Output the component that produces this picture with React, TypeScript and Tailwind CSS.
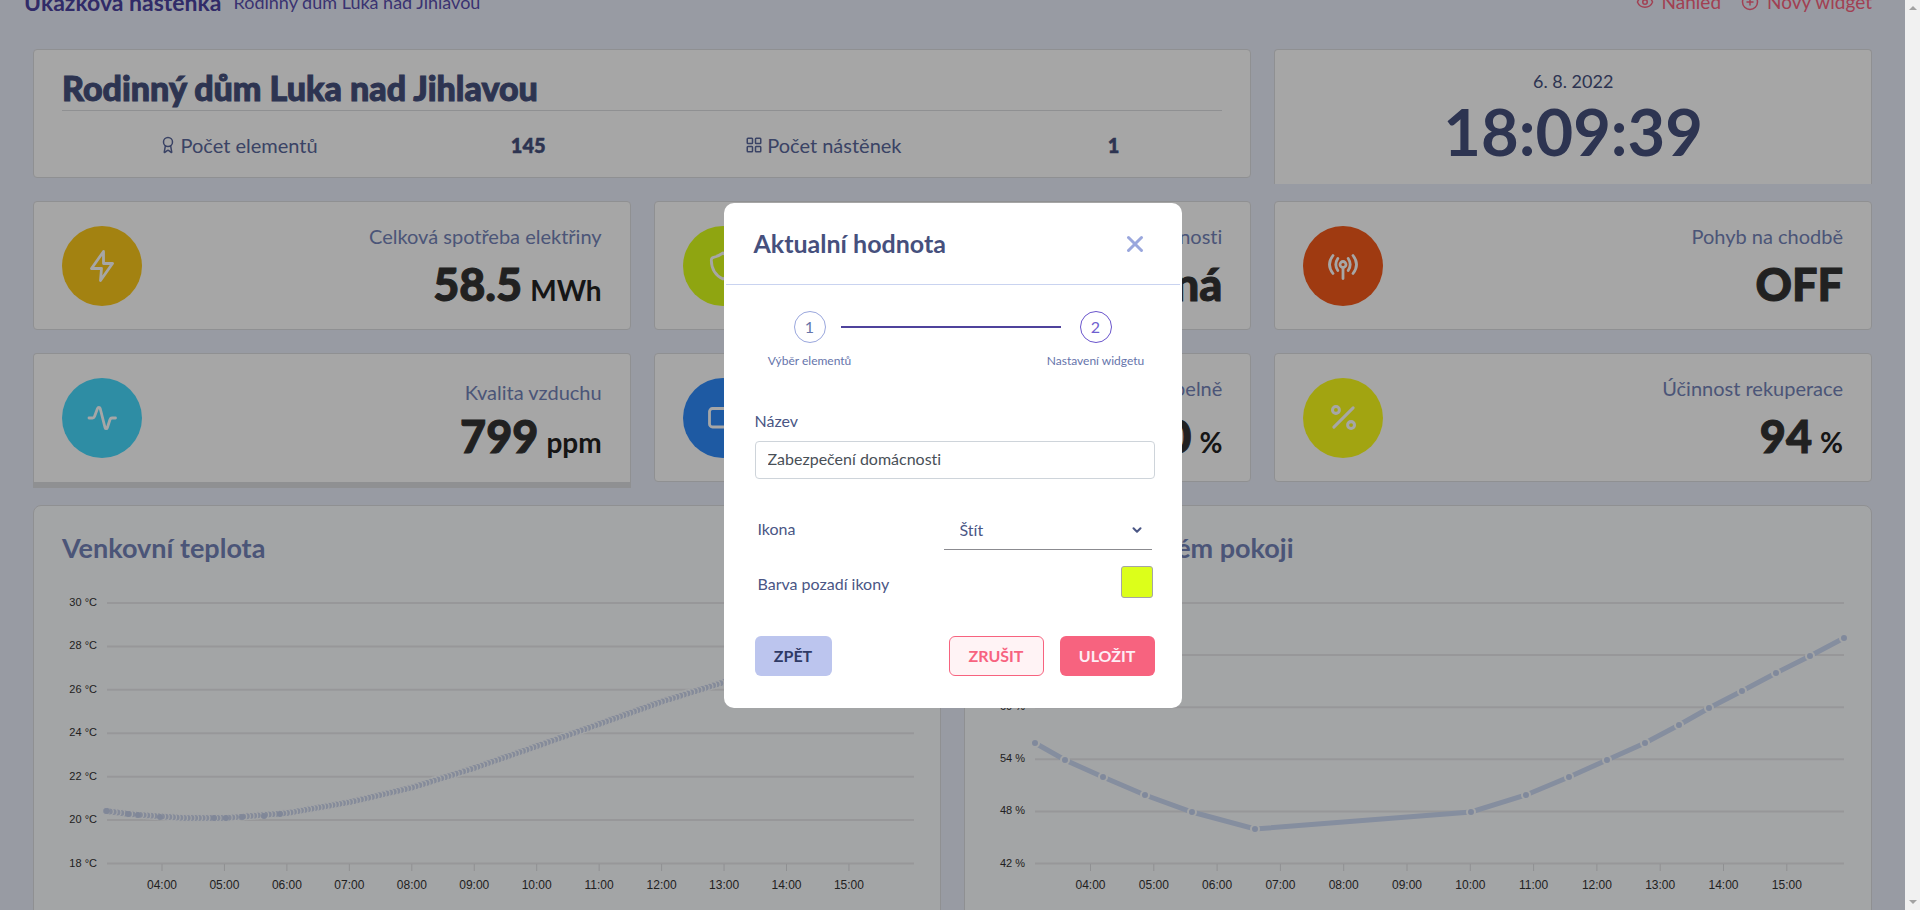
import React from "react";
import { Award, ChevronDown, Eye, LayoutGrid, Percent, PlusCircle, X } from "lucide-react";

type Point = [number, number];

const card = "rounded border border-[#dcdde0] bg-white";
const black = "font-black [-webkit-text-stroke:1px_currentColor]";

function Glyph({ children }: { children: React.ReactNode }) {
  return (
    <svg viewBox="0 0 32 32" className="size-8" fill="none" stroke="currentColor" strokeWidth="2.8" strokeLinecap="round" strokeLinejoin="round" aria-hidden="true">
      {children}
    </svg>
  );
}

const Bolt = () => <Glyph><path d="M17.5 1.5L5.5 18.5h10L14.5 30.5L26.5 13.5h-9Z" /></Glyph>;
const Guard = () => <Glyph><path d="M16 3c-3 2.2-6 3.6-9.5 4.3C4.9 7.7 4.3 8.7 4.3 10.2C4.5 18.5 8.5 25.5 16 29C23.5 25.5 27.5 18.5 27.7 10.2C27.7 8.7 27.1 7.7 25.5 7.3C22 6.6 19 5.2 16 3Z" /></Glyph>;
const Antenna = () => (
  <Glyph>
    <circle cx="16" cy="14.5" r="3" />
    <path d="M16 18v10.5M10.8 8.5q-4 6 0 12M21.2 8.5q4 6 0 12M6 5.5q-7 9 0 18M26 5.5q7 9 0 18" />
  </Glyph>
);
const Pulse = () => <Glyph><path d="M3 16h3.500c1 0 1.600-.5 2-1.500L11.500 6.500c.6-1.600 2.200-1.600 2.700 0L19 25.500c.5 1.600 1.900 1.600 2.400 0L24 17.500c.4-1 1-1.500 2-1.500h3.500" /></Glyph>;
const Cell = () => <Glyph><rect x="2.5" y="6.5" width="25" height="18.5" rx="3" /><path d="M31 13v6" /></Glyph>;

function ValueCard({ icon, color, label, value, unit, className = "h-[129px]", labelClass = "mb-1" }: {
  icon: React.ReactNode; color: string; label: string; value: string; unit?: string; className?: string; labelClass?: string;
}) {
  return (
    <section className={`${card} flex items-center justify-between px-7 ${className}`}>
      <div className={`flex size-20 shrink-0 items-center justify-center rounded-full text-white ${color}`}>{icon}</div>
      <div className="flex flex-col items-end pt-1">
        <h2 className={`text-[20px] leading-7 text-[#7483b8] ${labelClass}`}>{label}</h2>
        <p className={`text-[45px] leading-[60px] text-[#333] ${black}`}>
          {value}
          {unit && <span className="ml-2 text-[28px] leading-none font-bold text-[#222] [-webkit-text-stroke:0px]">{unit}</span>}
        </p>
      </div>
    </section>
  );
}

function Chart({ title, labels, left, right, firstTick, tickStep, children }: {
  title: string; labels: string[]; left: number; right: number; firstTick: number; tickStep: number; children: React.ReactNode;
}) {
  const step = 260.5 / (labels.length - 1);
  return (
    <section className="overflow-hidden rounded-lg border border-[#dcdde0] bg-[#fbfdff]">
      <h2 className="px-7 pt-[22px] pb-[2px] text-[27px] leading-10 font-bold text-[#7483b8]">{title}</h2>
      <svg viewBox="0 0 906 360" className="block w-full" role="img" aria-label={title}>
        {labels.map((l, i) => (
          <g key={l}>
            <path d={`M${left} ${33 + i * step}H${right}`} stroke="#e8e9ec" strokeWidth="2" />
            <text x={left - 10} y={36 + i * step} textAnchor="end" fontSize="11" fill="#333" className="font-['Liberation_Sans',sans-serif]">{l}</text>
          </g>
        ))}
        {Array.from({ length: 12 }, (_, i) => (
          <g key={i}>
            <path d={`M${firstTick + i * tickStep} 294v7`} stroke="#dcdde0" />
            <text x={firstTick + i * tickStep} y="319" textAnchor="middle" fontSize="12" fill="#333" className="font-['Liberation_Sans',sans-serif]">{`${String(i + 4).padStart(2, "0")}:00`}</text>
          </g>
        ))}
        {children}
      </svg>
    </section>
  );
}

const humidity: Point[] = [[70, 173], [100, 190], [138, 207], [180, 225], [227, 242], [290, 259], [506, 242], [561, 225], [604, 207], [642, 190], [680, 173], [714, 155], [744, 138], [777, 121], [811, 103], [845, 86], [879, 68]];
const temperature: Point[] = [[72, 241], [95, 244], [128, 246.5], [150, 248], [191, 248], [253, 243], [316, 232], [378, 217.5], [440, 198], [503, 176], [565, 154], [628, 131.5], [690, 112], [752, 95]];
const densePoints: Point[] = temperature.slice(1).flatMap(([x, y], i) => {
  const [px, py] = temperature[i];
  const n = Math.round((x - px) / 3.6);
  return Array.from({ length: n }, (_, k): Point => [px + ((x - px) * k) / n, py + ((y - py) * k) / n]);
}).reverse();
const sparsePoints: Point[] = [[73, 241], [94, 244], [104, 245], [126, 247], [180, 248], [192, 248], [208, 247], [230, 246], [246, 244]];

function WidgetDialog() {
  return (
    <div role="dialog" aria-modal="true" aria-labelledby="dialog-title" className="w-[458px] rounded-[10px] bg-white p-[2px] pb-8 text-[16px] text-[#4a5685]">
      <div className="flex h-20 items-center justify-between border-b border-[#c9d3f0] pr-8 pl-7">
        <h2 id="dialog-title" className="text-[25px] font-bold text-[#46507d]">Aktualní hodnota</h2>
        <button aria-label="Zavřít" className="text-[#9aa7dd]"><X size={26} strokeWidth={2.8} /></button>
      </div>
      <div className="pr-[25px] pl-[29px]">
        <ol className="flex justify-between pt-[26px] text-[#6674ab]">
          <li className="flex w-[110px] flex-col items-center gap-2">
            <span className="flex size-8 items-center justify-center rounded-full border border-[#9aa7dd]">1</span>
            <span className="text-[12px] leading-5">Výběr elementů</span>
          </li>
          <li aria-hidden="true" className="-mx-6 mt-[15px] h-[2px] flex-1 bg-[#4f439c]" />
          <li className="flex w-[118px] flex-col items-center gap-2">
            <span className="flex size-8 items-center justify-center rounded-full border border-[#6a55cc] text-[#6f5fd0]">2</span>
            <span className="text-[12px] leading-5 whitespace-nowrap">Nastavení widgetu</span>
          </li>
        </ol>
        <label htmlFor="widget-name" className="mt-[38px] block leading-6">Název</label>
        <input id="widget-name" defaultValue="Zabezpečení domácnosti" className="mt-2 block h-[38px] w-full rounded border border-[#ced4da] px-3 pb-[2px] text-[#495057]" />
        <div className="mt-8 flex h-[39px] items-center justify-between px-[3px]">
          <label htmlFor="widget-icon" className="pb-[2px]">Ikona</label>
          <div className="grid w-[208px] items-center border-b border-[#8b8b90]">
            <select id="widget-icon" defaultValue="shield" className="col-start-1 row-start-1 h-[38px] w-full appearance-none bg-transparent px-4">
              <option value="shield">Štít</option>
            </select>
            <ChevronDown size={14} strokeWidth={3.5} className="pointer-events-none col-start-1 row-start-1 mr-2 justify-self-end" />
          </div>
        </div>
        <div className="mt-4 flex items-center justify-between pr-[2px] pl-[3px]">
          <label htmlFor="widget-color" className="pt-1">Barva pozadí ikony</label>
          <button id="widget-color" aria-label="Barva pozadí ikony" className="size-8 rounded-[3px] border border-[#a5a5a5] bg-[#dcff1a]" />
        </div>
        <div className="mt-[38px] flex gap-4 font-bold">
          <button className="mr-auto h-10 w-[77px] rounded-md bg-[#bcc5ee] text-[#2f3a66]">ZPĚT</button>
          <button className="h-10 w-[95px] rounded-md border border-[#f7637f] bg-[#fff3f5] text-[#f7637f]">ZRUŠIT</button>
          <button className="h-10 w-[95px] rounded-md bg-[#f7637f] text-[#fdeef5]">ULOŽIT</button>
        </div>
      </div>
    </div>
  );
}

export default function App() {
  return (
    <div className="flex h-screen overflow-hidden bg-[#eaeefb] font-[Lato,'Open_Sans',sans-serif] text-[#46507d] [font-variant-ligatures:none]">
      <main className="relative min-w-0 flex-1 overflow-hidden">
        <header className="-mt-3 flex h-7 items-center justify-between pr-[33px] pl-6">
          <div className="flex items-center gap-3">
            <h1 className="text-[23px] font-bold text-[#4c43a0]">Ukázková nástěnka</h1>
            <span className="text-[18px] text-[#5a4fae]">Rodinný dům Luka nad Jihlavou</span>
          </div>
          <nav className="flex gap-5 text-[19px] text-[#f7637f]">
            <button className="flex items-center gap-2"><Eye size={18} />Náhled</button>
            <button className="flex items-center gap-2"><PlusCircle size={18} />Nový widget</button>
          </nav>
        </header>
        <div className="flex flex-col gap-[23px] px-[33px] pt-[33px]">
          <div className="grid grid-cols-3 items-start gap-[23px]">
            <section className={`${card} col-span-2 h-[129px] px-7 pt-[18px]`}>
              <h2 className={`border-b border-[#dcdde0] pb-[2px] text-[34px] leading-10 ${black}`}>Rodinný dům Luka nad Jihlavou</h2>
              <dl className="grid grid-cols-2 pt-5 text-[20px] leading-7">
                <div className="flex justify-around">
                  <dt className="flex items-center gap-1 text-[#5a679b]"><Award size={18} />Počet elementů</dt>
                  <dd className="font-black [-webkit-text-stroke:0.5px_currentColor]">145</dd>
                </div>
                <div className="flex justify-around">
                  <dt className="flex items-center gap-1 text-[#5a679b]"><LayoutGrid size={18} />Počet nástěnek</dt>
                  <dd className="font-black [-webkit-text-stroke:0.5px_currentColor]">1</dd>
                </div>
              </dl>
            </section>
            <section className="-mb-[6px] h-[135px] rounded-t border border-b-0 border-[#dcdde0] bg-white pt-[17px] text-center">
              <p className="text-[18px] leading-7">6. 8. 2022</p>
              <p className="text-[65px] leading-[72px] font-bold">18:09:39</p>
            </section>
          </div>
          <div className="grid grid-cols-3 items-start gap-[23px]">
            <ValueCard color="bg-[#fbc81b]" icon={<Bolt />} label="Celková spotřeba elektřiny" value="58.5" unit="MWh" />
            <ValueCard color="bg-[#dcfd1b]" icon={<Guard />} label="Zabezpečení domácnosti" value="Neaktivná" />
            <ValueCard color="bg-[#f45a1b]" icon={<Antenna />} label="Pohyb na chodbě" value="OFF" />
            <ValueCard className="-mb-[6px] h-[135px] rounded-b-none border-b-[6px]" color="bg-[#48d9fc]" icon={<Pulse />} label="Kvalita vzduchu" labelClass="mt-1" value="799" unit="ppm" />
            <ValueCard color="bg-[#2e8bfb]" icon={<Cell />} label="Baterie v kopelně" value="100" unit="%" />
            <ValueCard color="bg-[#f9fc1b]" icon={<Percent size={33} strokeWidth={2.2} />} label="Účinnost rekuperace" value="94" unit="%" />
          </div>
          <div className="grid grid-cols-2 gap-[23px]">
            <Chart title="Venkovní teplota" labels={["30 °C", "28 °C", "26 °C", "24 °C", "22 °C", "20 °C", "18 °C"]} left={73} right={880} firstTick={128} tickStep={62.45}>
              {densePoints.map(([x, y], i) => <circle key={i} cx={x} cy={y} r="3.5" fill="#ccd6ed" stroke="#fbfdff" strokeWidth="1.2" />)}
              {sparsePoints.map(([x, y]) => <circle key={x} cx={x} cy={y} r="3" fill="#c5d0ea" />)}
            </Chart>
            <Chart title="Vlhkost v dětském pokoji" labels={["72 %", "66 %", "60 %", "54 %", "48 %", "42 %"]} left={70} right={879} firstTick={125.5} tickStep={63.3}>
              <polyline points={humidity.map((p) => p.join(",")).join(" ")} fill="none" stroke="#cddaf4" strokeWidth="5" />
              {humidity.map(([x, y]) => <circle key={x} cx={x} cy={y} r="4" fill="#c5d3f0" stroke="#fbfdff" strokeWidth="2" />)}
            </Chart>
          </div>
        </div>
        <div className="absolute inset-0 flex items-center justify-center bg-black/35">
          <WidgetDialog />
        </div>
      </main>
      <div className="flex w-[15px] shrink-0 flex-col items-center justify-between bg-[#f1f1f1] py-1.5" aria-hidden="true">
        <svg width="8" height="4"><path d="M0 4L4 0L8 4Z" fill="#a3a3a3" /></svg>
        <svg width="8" height="4"><path d="M0 0L4 4L8 0Z" fill="#a3a3a3" /></svg>
      </div>
    </div>
  );
}
